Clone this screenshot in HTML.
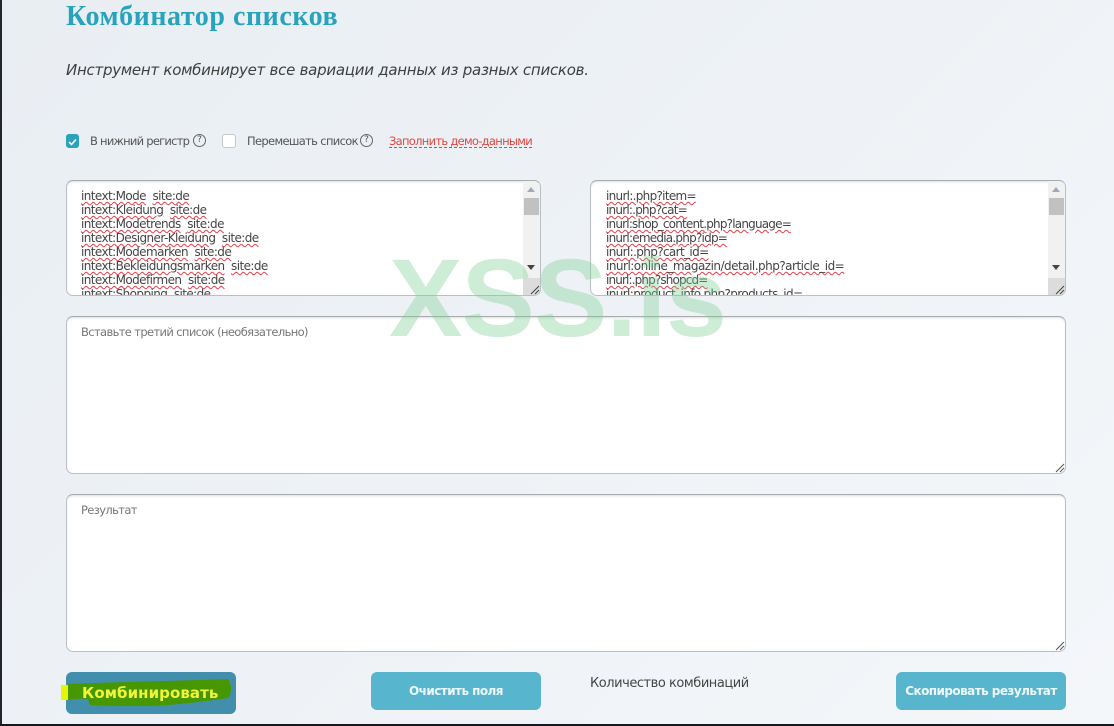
<!DOCTYPE html>
<html lang="ru"><head><meta charset="utf-8"><title>Комбинатор списков</title>
<style>
*{box-sizing:border-box}
html,body{margin:0;padding:0}
body{width:1114px;height:726px;overflow:hidden;position:relative;background:linear-gradient(135deg,#e9eef3 0%,#eef2f6 50%,#f4f7fa 100%);font-family:"DejaVu Sans","Liberation Sans",sans-serif;color:#444}
.a{position:absolute;white-space:nowrap}
.box{position:absolute;background:#fff;border:1px solid #bcbfc2;border-top-color:#a9acae;border-radius:7px;box-shadow:inset 0 2px 2px -1px #ddd;overflow:hidden}
.lines{position:absolute;left:14px;top:8px;font:12px/14px "DejaVu Sans",sans-serif;color:#444;letter-spacing:-.58px;white-space:pre}
.lines u{text-decoration:underline wavy #e8404a 1px;text-underline-offset:1px}
.sb{position:absolute;right:0;top:0;bottom:0;width:17px;background:#f1f1f1}
.th{position:absolute;left:1px;top:17px;width:15px;height:17px;background:#c1c1c1}
.up{position:absolute;left:4px;top:6px;width:0;height:0;border:4px solid transparent;border-top:0;border-bottom:5px solid #a3a8b8}
.dn{position:absolute;left:4px;top:84px;width:0;height:0;border:4px solid transparent;border-bottom:0;border-top:5px solid #444}
.gr{position:absolute;left:0;bottom:0;width:17px;height:17px;background:#dcdcdc}
.rs{position:absolute;right:0;bottom:0}
.ph{position:absolute;left:14px;top:8px;font:11.5px/14px "DejaVu Sans",sans-serif;color:#777;letter-spacing:-.63px;white-space:nowrap}
.btn{position:absolute;background:#57b5cd;border-radius:6px;color:#eef8fb;font:bold 12px/38px "DejaVu Sans",sans-serif;text-align:center;white-space:nowrap;letter-spacing:-.55px}
.q{position:absolute;width:13px;height:13px;border:1px solid #666;border-radius:50%;font:9px/11px "DejaVu Sans",sans-serif;text-align:center;color:#555}
</style></head><body>
<div class="a" style="left:0;top:0;width:2px;height:726px;background:#20262c"></div>
<div class="a" style="left:0;top:724px;width:1114px;height:2px;background:#15191d"></div>

<div class="a" style="left:66px;top:2px;font:bold 28px/30px 'Liberation Serif',serif;color:#27a3bd;letter-spacing:.55px">Комбинатор списков</div>
<div class="a" style="left:66px;top:60px;font:italic 15px/20px 'DejaVu Sans',sans-serif;color:#3f3f3f;letter-spacing:-.26px">Инструмент комбинирует все вариации данных из разных списков.</div>

<div class="a" style="left:66px;top:134px;width:13px;height:14px;background:#2aa3bf;border-radius:3px"><svg width="13" height="14" viewBox="0 0 13 14"><path d="M3 7l2.5 2.5L10 4.5" fill="none" stroke="#fff" stroke-width="1.6"/></svg></div>
<div class="a" style="left:90px;top:133px;font:11.5px/16px 'DejaVu Sans',sans-serif;color:#555;letter-spacing:-.75px">В нижний регистр</div>
<div class="q" style="left:193px;top:134px">?</div>
<div class="a" style="left:222px;top:134px;width:14px;height:14px;background:#fff;border:1px solid #c4c7ca;border-radius:3px"></div>
<div class="a" style="left:247px;top:133px;font:11.5px/16px 'DejaVu Sans',sans-serif;color:#555;letter-spacing:-.66px">Перемешать список</div>
<div class="q" style="left:360px;top:134px">?</div>
<div class="a" style="left:389px;top:133px;font:11.5px/16px 'DejaVu Sans',sans-serif;color:#e2453f;letter-spacing:-.71px;border-bottom:1px dashed #e2453f;height:15px">Заполнить демо-данными</div>

<div class="box" style="left:66px;top:180px;width:475px;height:116px">
<div class="lines"><u>intext:Mode</u>  <u>site:de</u>
<u>intext:Kleidung</u>  <u>site:de</u>
<u>intext:Modetrends</u>  <u>site:de</u>
<u>intext:Designer-Kleidung</u>  <u>site:de</u>
<u>intext:Modemarken</u>  <u>site:de</u>
<u>intext:Bekleidungsmarken</u>  <u>site:de</u>
<u>intext:Modefirmen</u>  <u>site:de</u>
<u>intext:Shopping</u>  <u>site:de</u></div>
<div class="sb"><div class="up"></div><div class="th"></div><div class="dn"></div><div class="gr"></div>
<svg class="rs" width="12" height="12" viewBox="0 0 12 12"><path d="M3 11L11 3M7 11l4-4" stroke="#444" stroke-width="1"/></svg></div>
</div>

<div class="box" style="left:590px;top:180px;width:476px;height:116px">
<div class="lines" style="left:15px"><u style="letter-spacing:-.7px">inurl:.php?item=</u>
<u style="letter-spacing:-.78px">inurl:.php?cat=</u>
<u style="letter-spacing:-.8px">inurl:shop_content.php?language=</u>
<u style="letter-spacing:-.77px">inurl:emedia.php?idp=</u>
<u style="letter-spacing:-.63px">inurl:.php?cart_id=</u>
<u style="letter-spacing:-.51px">inurl:online_magazin/detail.php?article_id=</u>
<u style="letter-spacing:-.86px">inurl:.php?shopcd=</u>
<u style="letter-spacing:-.61px">inurl:product_info.php?products_id=</u></div>
<div class="sb"><div class="up"></div><div class="th"></div><div class="dn"></div><div class="gr"></div>
<svg class="rs" width="12" height="12" viewBox="0 0 12 12"><path d="M3 11L11 3M7 11l4-4" stroke="#444" stroke-width="1"/></svg></div>
</div>

<div class="box" style="left:66px;top:316px;width:1000px;height:158px">
<div class="ph">Вставьте третий список (необязательно)</div>
<svg class="rs" width="12" height="12" viewBox="0 0 12 12"><path d="M3 11L11 3M7 11l4-4" stroke="#555" stroke-width="1"/></svg>
</div>
<div class="box" style="left:66px;top:494px;width:1000px;height:158px">
<div class="ph">Результат</div>
<svg class="rs" width="12" height="12" viewBox="0 0 12 12"><path d="M3 11L11 3M7 11l4-4" stroke="#555" stroke-width="1"/></svg>
</div>

<div class="a" style="left:66px;top:672px;width:170px;height:42px;background:#418fad;border-radius:6px"></div>
<svg class="a" style="left:0;top:640px" width="300" height="86" viewBox="0 0 300 86"><path d="M68 44C110 42 180 41 228 39C232 44 232 53 228 58C200 62 170 66 140 66C120 66 100 66 90 65L88 59C80 58 72 59 68 60Z" fill="#469700"/><path d="M61 45H68V60H61Z" fill="#e6f500"/></svg>
<div class="a" style="left:82px;top:683px;font:bold 15px/20px 'DejaVu Sans',sans-serif;color:#f0f53a;letter-spacing:.07px">Комбинировать</div>

<div class="btn" style="left:371px;top:672px;width:170px;height:38px">Очистить поля</div>
<div class="a" style="left:590px;top:675px;font:13px/18px 'DejaVu Sans',sans-serif;color:#444;letter-spacing:-.46px">Количество комбинаций</div>
<div class="btn" style="left:896px;top:672px;width:170px;height:38px">Скопировать результат</div>

<div class="a" style="left:389px;top:237px;font:bold 110px/124px 'Liberation Sans',sans-serif;color:rgba(120,205,145,.36);letter-spacing:-.9px;pointer-events:none">XSS.is</div>
</body></html>
